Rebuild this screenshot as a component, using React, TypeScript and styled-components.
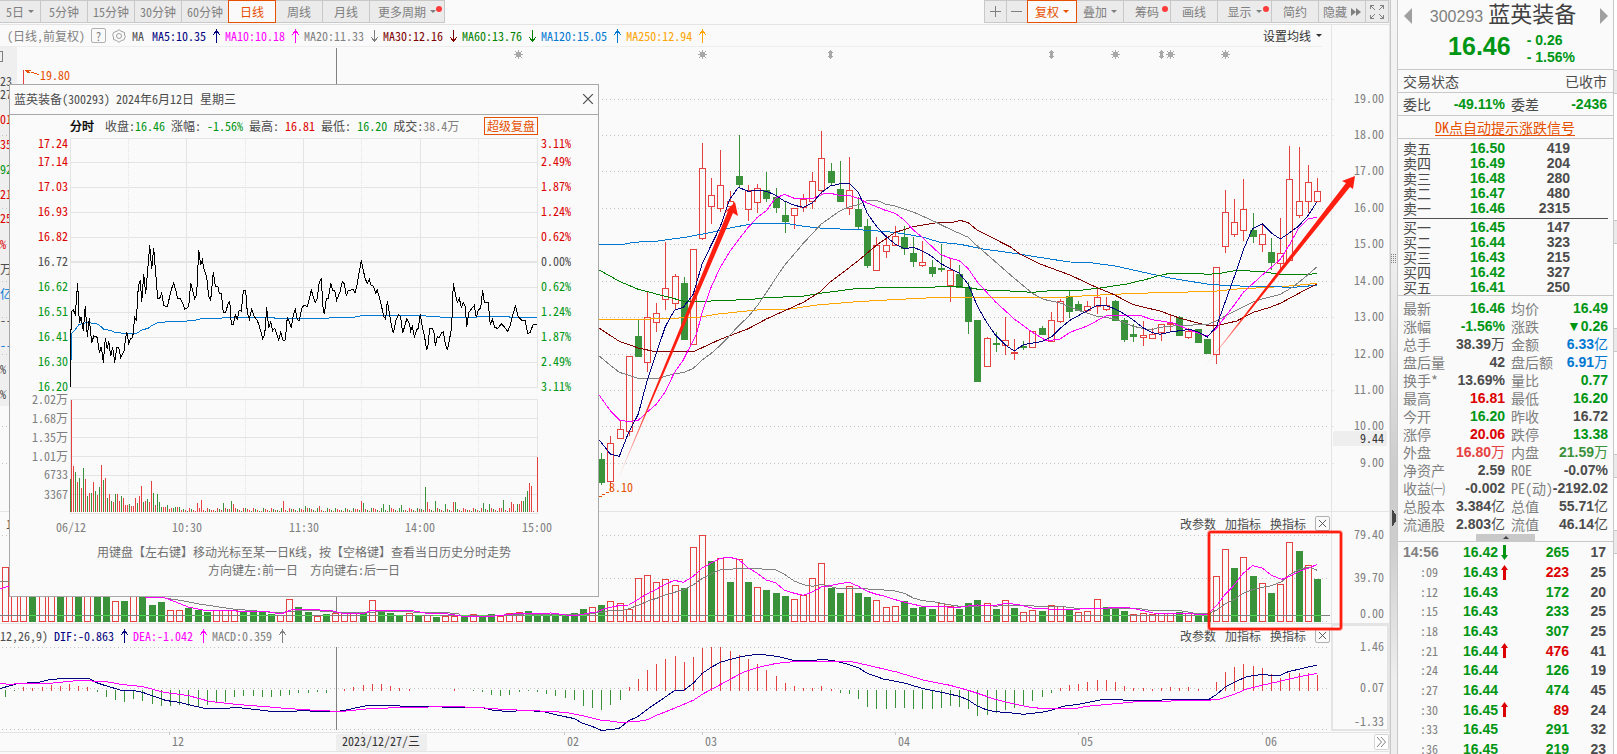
import React from "react";
import styled, { createGlobalStyle } from "styled-components";

const C = {
  bg: "#fafafa",
  line: "#e4e4e4",
  frame: "#c8c8c8",
  text: "#4c4c4c",
  mute: "#7f7f7f",
  green: "#009614",
  red: "#dc0000",
  blue: "#0078d2",
  orange: "#e65000",
  navy: "#000080",
  pink: "#ff00ff",
  maroon: "#800000",
  up: "#e64141",
  down: "#3a923a",
};

const sim = `"Noto Sans Mono CJK SC", "Noto Sans CJK SC", monospace`;
const arial = `"Liberation Sans", "Noto Sans CJK SC", sans-serif`;

const Global = createGlobalStyle`
  * { box-sizing: border-box; }
  body { margin: 0; background: ${C.bg}; color: ${C.text}; font: 12px/16px ${sim}; overflow: hidden; }
  button { font: inherit; color: inherit; background: none; border: 0; padding: 0; margin: 0; cursor: pointer; white-space: nowrap; }
  table { border-collapse: separate; border-spacing: 0; }
  td, th { padding: 0; font-weight: normal; text-align: left; }
  p, h1, h2 { margin: 0; font-weight: normal; }
`;

const Page = styled.div`
  display: flex;
  min-height: 100vh;
`;

const Main = styled.main`
  position: relative;
  flex: 1;
  min-width: 0;
  border-right: 1px solid ${C.line};
  overflow: hidden;
`;

/* ---------- toolbar ---------- */

const Toolbar = styled.nav`
  display: flex;
  justify-content: space-between;
  height: 25px;
  border-bottom: 1px solid ${C.line};
`;

const ToolGroup = styled.div`
  display: flex;
  height: 23px;
`;

const Tool = styled.button<{ $w: number; $on?: boolean }>`
  position: relative;
  display: flex;
  align-items: center;
  justify-content: center;
  gap: 4px;
  width: ${(p) => p.$w + 1}px;
  margin-left: -1px;
  border: 1px solid ${(p) => (p.$on ? C.orange : C.frame)};
  background: ${(p) => (p.$on ? C.bg : "#ebebeb")};
  color: ${(p) => (p.$on ? C.orange : C.mute)};
  z-index: ${(p) => (p.$on ? 1 : 0)};
`;

const Caret = styled.i`
  border: 3px solid transparent;
  border-top-color: currentColor;
  border-bottom: 0;
`;

const Dot = styled.i`
  position: absolute;
  top: 5px;
  right: 2px;
  width: 6px;
  height: 6px;
  border-radius: 3px;
  background: #ff3c3c;
`;

/* ---------- pane headers ---------- */

const Header = styled.div<{ $h: number }>`
  display: flex;
  height: ${(p) => p.$h}px;
`;

const HeaderBody = styled.div<{ $ruled?: boolean }>`
  display: flex;
  align-items: center;
  flex: 1;
  min-width: 0;
  margin-right: ${(p) => (p.$ruled ? 9 : 0)}px;
  border-bottom: ${(p) => (p.$ruled ? 1 : 0)}px solid #ededed;
  white-space: pre;
`;

const AxisCell = styled.div`
  width: 58px;
  border-left: 1px solid ${C.line};
`;

const Pane = styled.section`
  border-top: 1px solid ${C.line};
`;

const Chart = styled.svg`
  position: relative;
  display: block;
  width: 100%;
  overflow: visible;
  text {
    font: 12px ${sim};
    white-space: pre;
  }
`;

const FrontChart = styled(Chart)`
  z-index: 1;
`;

const Title = styled.span`
  margin: 0 6px 0 7px;
  color: ${C.mute};
`;

const Help = styled.button`
  width: 15px;
  height: 15px;
  margin-right: 6px;
  border: 1px solid #b0b0b0;
  border-radius: 2px;
  color: ${C.mute};
  line-height: 13px;
`;

const IconButton = styled.button`
  width: 14px;
  height: 14px;
  margin-right: 6px;
  svg { display: block; }
`;

const Legend = styled.span<{ $c: string }>`
  display: flex;
  align-items: center;
  gap: 4px;
  margin-right: 3px;
  color: ${(p) => p.$c};
`;

const Lead = styled.span<{ $gap: number }>`
  margin-right: ${(p) => p.$gap}px;
`;

const Push = styled.div`
  display: flex;
  align-items: center;
  gap: 9px;
  margin-left: auto;
`;

const Actions = styled(Push)`
  padding-right: 1px;
`;

const Setting = styled.button`
  display: flex;
  align-items: center;
  gap: 5px;
  color: #333;
`;

const CloseBox = styled.button`
  width: 15px;
  height: 15px;
  border: 1px solid #b0b0b0;
  border-radius: 2px;
  svg { display: block; margin: 2px; }
`;

const Arrow = ({ down }: { down?: boolean }) => (
  <svg width="12" height="14" viewBox="0 0 12 14" fill="none" stroke="currentColor" shapeRendering="crispEdges">
    {down ? <path d="M6.5 1v12M4.5 9v2M8.5 9v2M3.5 8v1M9.5 8v1M5.5 10v2M7.5 10v2" /> : <path d="M6.5 0v14M5.5 2v2M7.5 2v2M4.5 3v2M8.5 3v2M3.5 5v1M9.5 5v1" />}
  </svg>
);

const Cross = ({ s, c }: { s: number; c: string }) => (
  <svg width={s} height={s} viewBox="0 0 10 10" stroke={c} fill="none">
    <path d="M1 1L9 9M9 1L1 9" />
  </svg>
);

/* ---------- popup ---------- */

const Popup = styled.section`
  position: absolute;
  left: 9px;
  top: 84px;
  z-index: 3;
  width: 590px;
  height: 513px;
  border: 1px solid #a8a8a8;
  background: ${C.bg};
`;

const PopupTitle = styled.header`
  display: flex;
  align-items: center;
  justify-content: space-between;
  height: 30px;
  padding: 0 4px 2px;
  border-bottom: 1px solid #a8a8a8;
  h2 { font-size: 12px; }
`;

const PopupClose = styled.button`
  width: 12px;
  height: 12px;
  svg { display: block; }
`;

const PopupInfo = styled.div`
  display: flex;
  align-items: center;
  height: 22px;
  padding-left: 60px;
  white-space: pre;
  b { margin-right: 11px; color: #000; font-weight: normal; -webkit-text-stroke: 0.4px #000; }
`;

const Replay = styled.button`
  width: 54px;
  height: 18px;
  margin: 0 60px 0 auto;
  border: 1px solid ${C.orange};
  color: ${C.orange};
`;

const Tone = styled.span<{ $c: string; $gap?: number }>`
  color: ${(p) => p.$c};
  margin-right: ${(p) => p.$gap || 0}px;
`;

const Tip = styled.p`
  color: #707070;
  text-align: center;
  line-height: 18px;
  white-space: pre;
`;

const TipBox = styled.div`
  padding-top: 6px;
`;

/* ---------- quote panel ---------- */

const Splitter = styled.div`
  display: flex;
  flex-direction: column;
  align-items: center;
  width: 8px;
  border-left: 1px solid ${C.frame};
  border-right: 1px solid ${C.frame};
  background: linear-gradient(#f4f4f4, #eeeeee 35%, #cdcdcd 62%, #cdcdcd 72%, #eeeeee 90%);
`;

const Quote = styled.aside`
  width: 216px;
  height: 100vh;
  overflow: hidden;
  border-right: 1px solid ${C.frame};
  font-size: 14px;
`;

const Strip = styled.div`
  width: 3px;
  background: #fff;
`;

const StripTab = styled.div<{ $gap: number }>`
  height: 24px;
  margin-top: ${(p) => p.$gap}px;
  background: #ebebeb;
  border-top: 1px solid ${C.frame};
  border-bottom: 1px solid ${C.frame};
`;

const QuoteHead = styled.header`
  height: 70px;
  border-bottom: 1px solid ${C.frame};
`;

const NameRow = styled.div`
  display: flex;
  align-items: center;
  justify-content: space-between;
  height: 32px;
  padding: 0 5px 0 6px;
  button { height: 16px; }
  svg { display: block; }
  h1 { padding-right: 6px; font: 22px/30px ${arial}; color: #404040; }
  span { margin-right: 5px; font-size: 16px; color: ${C.mute}; }
`;

const PriceRow = styled.div`
  display: flex;
  justify-content: center;
  gap: 16px;
  padding: 0 2px 0 14px;
  color: ${C.green};
  font: bold 25px/28px ${arial};
  small { display: block; font: bold 14px/17px ${arial}; white-space: pre; }
`;

const Line = styled.div<{ $center?: boolean }>`
  display: flex;
  align-items: center;
  justify-content: ${(p) => (p.$center ? "center" : "space-between")};
  height: 23px;
  padding: 0 6px 0 5px;
  border-bottom: 1px solid ${C.frame};
  a { color: ${C.orange}; line-height: 16px; text-underline-offset: 2px; }
`;

const QuadLine = styled(Line)`
  display: grid;
  grid-template-columns: 44px 58px 1fr auto;
  > span:nth-child(2) { text-align: right; }
  > span:nth-child(3) { padding-left: 6px; }
`;

const Num = styled.span<{ $c?: string }>`
  display: block;
  color: ${(p) => p.$c || C.text};
  font-family: ${arial};
  font-size: 14px;
  font-weight: bold;
  white-space: nowrap;
  i { font-weight: normal; font-style: normal; }
`;

const Book = styled.table<{ $last?: boolean }>`
  width: 205px;
  margin: ${(p) => (p.$last ? "1px 5px 0" : "2px 5px 0")};
  padding-bottom: ${(p) => (p.$last ? 0 : 2)}px;
  table-layout: fixed;
  border-bottom: ${(p) => (p.$last ? "0" : "1px solid #505050")};
  tr { height: 15px; }
  td, th { height: 15px; line-height: 15px; }
  th { width: 40px; }
  td { width: 62px; text-align: right; }
  td + td { width: 65px; }
  td:last-child { width: 38px; }
`;

const Books = styled.div`
  border-bottom: 1px solid ${C.frame};
`;

const Stats = styled.table`
  width: 205px;
  margin: 3px 5px 0;
  table-layout: fixed;
  th, td { height: 18px; line-height: 18px; white-space: nowrap; }
  th { color: ${C.mute}; }
  td { text-align: right; }
  col:nth-child(1), col:nth-child(3) { width: 44px; }
  col:nth-child(2) { width: 58px; }
  td > span { float: right; }
  i { line-height: 14px; }
  th + td + th { padding-left: 6px; }
`;

const Fold = styled.div`
  display: flex;
  justify-content: center;
  height: 9px;
  padding-top: 1px;
  border-bottom: 1px solid ${C.frame};
`;

const FoldTab = styled.button`
  width: 59px;
  background: ${C.frame};
  svg { display: block; margin: 0 auto; }
`;

const Ticks = styled.table`
  width: 203px;
  margin: 0 5px;
  table-layout: fixed;
  tr { height: 20px; }
  tr:nth-child(3n) { height: 19px; }
  td { text-align: right; line-height: 18px; }
  td:nth-child(1) { width: 35px; color: ${C.mute}; }
  td:nth-child(2) { width: 60px; }
  td:nth-child(3) { width: 12px; }
  td:nth-child(4) { width: 59px; }
  svg { display: block; margin: 0 auto; }
`;

const Time = styled.span<{ $b: boolean }>`
  display: block;
  font-family: ${(p) => (p.$b ? arial : sim)};
  font-size: ${(p) => (p.$b ? 14 : 12)}px;
  font-weight: ${(p) => (p.$b ? "bold" : "normal")};
`;

/* ---------- series: three grid units to a pixel, from the pane's plot origin ---------- */

const STEP = 9.175;
const barX = (i: number) => Math.floor(601.7 + i * STEP);

const trace = (pts: number[], ox: number, oy: number, unit = 3) => {
  const out: string[] = [];
  for (let i = 0; i < pts.length; i += 2) out.push(`${(ox + pts[i] / unit).toFixed(1)},${(oy + pts[i + 1] / unit).toFixed(1)}`);
  return out.join(" ");
};

// high, body top, body bottom, low, rising
const candles: number[][] = [
  [999, 1017, 1088, 1097, 0], [948, 970, 1084, 1110, 1], [901, 928, 956, 956, 1], [709, 709, 935, 950, 1], [600, 648, 708, 711, 0],
  [517, 592, 727, 756, 1], [550, 580, 607, 636, 1], [366, 505, 538, 570, 1], [462, 469, 550, 567, 1], [471, 489, 657, 660, 0],
  [388, 388, 673, 673, 1], [70, 145, 355, 360, 1], [174, 226, 259, 312, 1], [91, 196, 265, 276, 1], [213, 244, 259, 262, 1],
  [45, 168, 194, 205, 0], [195, 211, 268, 303, 1], [192, 205, 247, 279, 1], [156, 210, 236, 248, 0], [204, 231, 263, 281, 0],
  [245, 285, 303, 339, 0], [265, 265, 286, 327, 1], [222, 238, 262, 276, 1], [156, 184, 244, 268, 1], [33, 115, 211, 225, 1],
  [129, 153, 188, 198, 0], [123, 207, 245, 245, 0], [111, 211, 265, 285, 1], [231, 267, 318, 331, 0], [297, 318, 437, 444, 0],
  [351, 376, 451, 451, 1], [345, 376, 394, 414, 1], [318, 349, 376, 376, 1], [318, 351, 385, 406, 0], [351, 399, 425, 441, 0],
  [363, 427, 436, 443, 1], [420, 441, 459, 473, 0], [373, 444, 449, 456, 0], [414, 451, 496, 548, 1], [435, 462, 503, 503, 0],
  [486, 502, 603, 644, 0], [600, 600, 785, 785, 0], [652, 655, 739, 739, 1], [636, 669, 671, 698, 0], [591, 661, 676, 705, 1],
  [657, 696, 701, 720, 1], [663, 678, 683, 690, 0], [634, 634, 683, 683, 1], [618, 624, 644, 647, 0], [576, 601, 664, 664, 1],
  [538, 544, 604, 611, 1], [513, 530, 573, 594, 0], [543, 552, 571, 573, 0], [544, 559, 572, 576, 1], [505, 532, 559, 583, 1],
  [532, 556, 568, 573, 1], [541, 543, 600, 603, 0], [595, 600, 659, 666, 0], [612, 642, 650, 666, 0], [603, 646, 652, 678, 1],
  [624, 643, 656, 656, 1], [613, 613, 637, 663, 1], [582, 609, 613, 634, 1], [588, 592, 645, 647, 0], [626, 634, 653, 657, 1],
  [627, 627, 668, 671, 0], [657, 657, 701, 704, 0], [442, 442, 704, 732, 1], [210, 277, 379, 399, 1], [237, 307, 343, 351, 1],
  [177, 268, 331, 363, 1], [279, 330, 348, 369, 0], [310, 343, 373, 396, 1], [354, 396, 426, 450, 0], [294, 400, 430, 450, 1],
  [78, 178, 421, 421, 1], [81, 244, 286, 294, 1], [135, 187, 244, 279, 1], [174, 214, 244, 244, 1],
];

const averages: { c: string; pts: number[] }[] = [
  { c: "#ffa500", pts: [28, 599, 100, 600, 150, 598, 250, 595, 330, 591, 385, 582, 500, 570, 600, 567, 680, 555, 800, 545, 930, 538, 1050, 532, 1420, 532, 1490, 527, 1570, 523, 1730, 517, 1860, 515, 1940, 507, 2040, 502, 2110, 497, 2180, 490] },
  { c: C.blue, pts: [28, 373, 100, 373, 130, 367, 205, 363, 290, 351, 370, 336, 430, 322, 485, 312, 530, 310, 600, 312, 640, 319, 700, 325, 840, 331, 910, 337, 950, 343, 1000, 352, 1050, 367, 1110, 373, 1180, 387, 1280, 401, 1385, 418, 1440, 426, 1495, 427, 1580, 439, 1670, 459, 1740, 474, 1850, 492, 1910, 497, 2040, 500, 2110, 502, 2180, 496] },
  { c: "#008000", pts: [28, 450, 88, 484, 145, 508, 226, 529, 290, 546, 340, 544, 490, 538, 530, 532, 630, 530, 660, 525, 690, 520, 790, 507, 850, 505, 870, 502, 1020, 502, 1050, 500, 1110, 500, 1150, 506, 1200, 511, 1260, 513, 1327, 517, 1370, 513, 1470, 511, 1530, 504, 1610, 492, 1670, 478, 1700, 468, 1740, 460, 1810, 460, 1855, 463, 1890, 460, 1940, 451, 2020, 455, 2060, 462, 2160, 463, 2180, 460] },
  { c: C.maroon, pts: [28, 625, 88, 664, 145, 684, 190, 694, 255, 694, 290, 696, 315, 693, 391, 658, 475, 626, 529, 597, 640, 547, 690, 516, 721, 486, 805, 422, 860, 375, 916, 337, 970, 320, 1040, 308, 1090, 307, 1110, 301, 1135, 308, 1162, 331, 1260, 380, 1290, 402, 1350, 432, 1440, 465, 1519, 502, 1570, 523, 1630, 554, 1710, 573, 1770, 595, 1852, 616, 1890, 615, 1940, 603, 1990, 577, 2040, 562, 2071, 550, 2130, 518, 2180, 492] },
  { c: "#808080", pts: [28, 708, 60, 735, 88, 757, 145, 775, 205, 775, 250, 762, 283, 757, 310, 745, 337, 720, 364, 700, 391, 676, 418, 648, 445, 618, 475, 590, 502, 557, 529, 518, 556, 476, 583, 437, 640, 370, 694, 312, 748, 274, 778, 260, 805, 254, 832, 241, 860, 241, 886, 252, 916, 258, 970, 276, 1024, 300, 1081, 328, 1135, 352, 1162, 378, 1216, 425, 1273, 475, 1327, 520, 1360, 538, 1411, 549, 1465, 571, 1519, 588, 1576, 597, 1630, 619, 1680, 630, 1710, 622, 1770, 616, 1852, 614, 1879, 603, 1930, 575, 1987, 547, 2017, 537, 2071, 523, 2110, 500, 2140, 476, 2180, 441] },
  { c: C.pink, pts: [28, 826, 61, 872, 88, 900, 116, 905, 145, 901, 172, 876, 199, 853, 226, 815, 253, 758, 280, 720, 300, 680, 320, 640, 337, 576, 364, 500, 391, 442, 418, 397, 445, 360, 475, 322, 502, 292, 529, 272, 556, 235, 583, 223, 613, 235, 670, 235, 700, 222, 721, 220, 748, 226, 778, 226, 805, 235, 832, 249, 886, 271, 916, 280, 943, 300, 970, 330, 997, 352, 1024, 378, 1051, 403, 1081, 415, 1108, 422, 1135, 446, 1162, 486, 1216, 545, 1273, 597, 1327, 637, 1370, 663, 1410, 657, 1440, 637, 1492, 618, 1549, 587, 1590, 585, 1655, 588, 1687, 599, 1750, 609, 1800, 631, 1852, 649, 1879, 625, 1906, 590, 1933, 555, 1960, 517, 2017, 465, 2044, 442, 2071, 418, 2098, 375, 2125, 326, 2155, 297, 2180, 292] },
  { c: C.navy, pts: [28, 960, 61, 1002, 88, 1009, 115, 940, 145, 882, 172, 780, 199, 700, 226, 620, 253, 571, 280, 562, 310, 522, 337, 430, 364, 375, 391, 320, 418, 240, 445, 202, 475, 214, 502, 211, 529, 214, 556, 225, 583, 243, 613, 256, 640, 262, 667, 249, 694, 218, 721, 198, 748, 192, 778, 190, 805, 216, 832, 280, 859, 318, 886, 348, 916, 372, 943, 386, 970, 382, 997, 393, 1024, 408, 1051, 430, 1081, 446, 1108, 460, 1135, 493, 1162, 558, 1189, 605, 1216, 645, 1246, 675, 1273, 693, 1300, 674, 1354, 665, 1384, 651, 1411, 625, 1438, 602, 1492, 572, 1519, 557, 1549, 557, 1576, 567, 1603, 582, 1630, 600, 1657, 622, 1687, 638, 1710, 643, 1741, 636, 1800, 628, 1825, 636, 1852, 651, 1879, 620, 1906, 545, 1933, 470, 1960, 390, 1987, 327, 2017, 311, 2044, 339, 2071, 357, 2098, 339, 2125, 319, 2155, 286, 2180, 246] },
];

// bar tops from index -65; a leading minus marks a falling day
const volumes = [
  232, 300, 300, -300, 300, 300, -300, 300, -300, 300, -300, -300, 334, -333, 300, -318, -345, -336, 361, 361, -354, -360, -366, 361, 361, 361,
  -363, -361, -364, -372, 376, 328, -351, -366, 379, -372, 370, 367, 369, -369, 331, -364, -369, -378, 369, -378, 375, -381, 379, 378, -379, 373,
  -380, -372, 379, 370, 367, -363, -376, -376, -377, -375, -369, -357, 352,
  -345, 334, 340, 358, 265, 256, 277, 268, 286, -294, 172, 136, -213, 205, -276, 208, -276, 292, -300, -309, -318, 328, 316, 265, 220, -294, -309,
  289, -309, -321, 331, 352, 349, -333, -354, -351, -357, 340, 349, -357, -339, -330, 340, -357, 331, -354, 367, 361, -363, 346, 349, -360, 367,
  364, 328, -351, -357, -363, 373, 371, 373, 371, 371, -366, 370, -375, -370, 259, 178, -234, 202, -258, 280, -309, 283, 157, -183, 226, -267,
];

const histogram = [
  -21, -3, 8, 5, 8, 15, 12, 18, 12, 9, -5, -21, -30, -36, -26, -32, -42, -47, -47, -44, -48, -48, -44, -38, -36, -21, -18, -18, -21, -21,
  -18, -15, -9, -9, -6, -9, 0, 2, 9, 15, 18, 18, 12, 6, 2, 0, 0, 0, 0, 2, 0, -2, -6, -15, -19, -15, -6, -2, -6, -12, -18, -24, -29, -48, -54,
  -60, -45, -30, 8, 33, 60, 78, 93, 102, 84, 99, 126, 129, 129, 117, 105, 93, 78, 60, 42, 21, 12, 6, 6, 12, 3, -9, -12, -27, -51, -57, -57,
  -54, -54, -57, -57, -57, -54, -48, -51, -57, -78, -75, -68, -60, -54, -45, -33, -21, -9, 6, 15, 18, 24, 30, 30, 24, 12, 6, 6, 3, 6, 9, 6, 9,
  3, 0, 24, 54, 69, 78, 72, 66, 48, 36, 51, 51, 50, 45,
];

const volFastEarly = [145, 597, 165, 598, 176, 602, 188, 607, 203, 610, 233, 610, 239, 612, 264, 611, 281, 614, 291, 610, 306, 609, 333, 611, 341, 613, 362, 614, 373, 610, 409, 610, 425, 613, 448, 614, 461, 616, 486, 617, 513, 614, 551, 613, 574, 616, 589, 613];
const volSlowEarly = [145, 597, 165, 598, 184, 601, 199, 604, 233, 609, 268, 612, 285, 612, 306, 610, 333, 612, 367, 613, 383, 611, 413, 612, 440, 612, 459, 614, 461, 616, 486, 616, 524, 614, 563, 615, 589, 614];
const volFast = [0, 367, 20, 366, 40, 358, 65, 351, 90, 346, 116, 345, 145, 328, 172, 311, 200, 297, 226, 283, 253, 271, 280, 277, 310, 259, 337, 234, 364, 219, 391, 205, 418, 202, 445, 208, 475, 234, 502, 250, 529, 270, 556, 278, 583, 300, 613, 310, 640, 316, 667, 306, 694, 291, 721, 287, 748, 281, 778, 277, 805, 289, 832, 304, 859, 313, 886, 319, 916, 329, 943, 336, 970, 343, 997, 349, 1051, 349, 1081, 352, 1108, 352, 1135, 348, 1162, 345, 1216, 346, 1246, 340, 1280, 343, 1310, 350, 1327, 354, 1375, 357, 1470, 357, 1510, 356, 1600, 352, 1630, 355, 1660, 362, 1690, 369, 1770, 371, 1853, 373, 1879, 348, 1906, 313, 1933, 285, 1960, 250, 1987, 227, 2017, 234, 2044, 256, 2075, 268, 2098, 259, 2125, 245, 2155, 235, 2182, 223];
const volSlow = [0, 371, 34, 367, 61, 361, 100, 361, 116, 356, 145, 346, 172, 334, 200, 325, 226, 315, 253, 307, 280, 300, 310, 285, 337, 265, 364, 251, 391, 239, 430, 237, 460, 235, 515, 237, 556, 239, 583, 253, 613, 273, 640, 284, 667, 289, 694, 283, 721, 290, 748, 296, 805, 296, 860, 298, 916, 303, 943, 310, 970, 324, 997, 332, 1030, 335, 1060, 341, 1108, 349, 1162, 349, 1189, 345, 1215, 349, 1246, 346, 1310, 346, 1340, 349, 1420, 350, 1460, 355, 1640, 355, 1690, 362, 1770, 362, 1810, 369, 1853, 371, 1879, 361, 1906, 341, 1933, 328, 1960, 310, 1987, 299, 2017, 292, 2044, 287, 2075, 275, 2098, 255, 2125, 239, 2155, 231, 2182, 241];

const difEarly = [0, 688, 11, 685, 17, 683, 38, 682, 50, 679, 65, 678, 89, 678, 96, 682, 105, 685, 122, 690, 134, 690, 143, 692, 166, 700, 180, 702, 188, 704, 205, 708, 224, 708, 237, 707, 264, 710, 272, 711, 293, 711, 302, 710, 318, 711, 337, 711, 344, 710, 362, 706, 369, 705, 394, 705, 406, 706, 425, 706, 459, 707, 482, 707, 494, 710, 509, 711, 524, 710, 543, 711, 555, 714, 564, 716, 574, 718, 583, 723, 590, 725];
const deaEarly = [0, 683, 11, 684, 17, 683, 48, 683, 78, 680, 105, 681, 122, 684, 142, 686, 165, 692, 188, 695, 210, 701, 237, 704, 264, 706, 287, 708, 318, 710, 341, 711, 371, 708, 406, 707, 452, 706, 478, 707, 505, 709, 551, 711, 566, 712, 582, 715, 590, 717];
const dif = [0, 706, 34, 721, 61, 719, 88, 715, 115, 693, 145, 679, 172, 658, 226, 621, 253, 602, 283, 600, 310, 580, 337, 550, 364, 532, 391, 517, 418, 509, 460, 499, 502, 493, 529, 495, 560, 499, 610, 511, 675, 511, 700, 508, 740, 514, 778, 524, 805, 533, 832, 550, 880, 567, 943, 579, 1000, 596, 1060, 608, 1108, 619, 1135, 630, 1162, 648, 1189, 659, 1216, 665, 1246, 667, 1300, 673, 1354, 667, 1384, 661, 1420, 649, 1470, 642, 1530, 630, 1570, 628, 1610, 631, 1690, 632, 1740, 628, 1855, 629, 1879, 614, 1906, 591, 1933, 577, 1970, 560, 2017, 553, 2040, 556, 2070, 556, 2095, 545, 2155, 531, 2180, 526];
const dea = [0, 682, 34, 691, 70, 694, 100, 699, 115, 696, 160, 692, 180, 686, 200, 676, 250, 656, 310, 631, 340, 611, 400, 579, 460, 547, 500, 533, 560, 520, 600, 516, 700, 514, 780, 514, 830, 525, 920, 546, 1000, 570, 1080, 586, 1135, 601, 1189, 619, 1215, 628, 1270, 641, 1310, 650, 1350, 655, 1400, 657, 1460, 655, 1490, 649, 1590, 640, 1650, 634, 1730, 634, 1770, 631, 1853, 631, 1890, 627, 1930, 614, 1970, 597, 2020, 585, 2070, 574, 2120, 562, 2182, 550];

const intraday = [
  212, 920, 212, 807, 214, 695, 220, 690, 226, 702, 233, 608, 238, 730, 243, 712, 250, 752, 256, 677, 262, 770, 268, 715, 275, 790, 281, 768, 292, 772, 298, 818, 304, 800, 310, 848, 316, 775, 322, 808, 326, 782, 332, 828, 338, 802, 344, 848, 350, 803, 356, 803, 362, 833, 372, 812, 375, 790, 380, 755, 386, 790, 392, 775, 398, 773, 404, 712, 409, 722, 415, 620, 421, 600, 425, 666, 431, 583, 437, 641, 443, 570, 449, 495, 455, 568, 461, 505, 467, 580, 473, 655, 479, 655, 485, 640, 491, 677, 502, 680, 508, 655, 515, 625, 521, 610, 527, 630, 533, 656, 541, 656, 548, 670, 554, 688, 566, 680, 572, 610, 578, 632, 584, 656, 590, 643, 596, 510, 602, 555, 607, 540, 613, 570, 620, 590, 626, 650, 632, 660, 640, 575, 646, 618, 653, 618, 658, 640, 664, 640, 670, 698, 677, 697, 683, 675, 689, 662, 694, 733, 700, 733, 706, 705, 712, 717, 718, 690, 724, 693, 730, 632, 737, 632, 742, 697, 748, 718, 755, 688, 762, 708, 772, 722, 778, 738, 788, 775, 794, 765, 800, 682, 806, 745, 812, 725, 818, 752, 824, 745, 830, 763, 836, 780, 842, 757, 849, 781, 856, 780, 862, 712, 868, 725, 874, 745, 880, 705, 886, 688, 892, 718, 898, 722,
  905, 685, 912, 676, 922, 680, 934, 631, 946, 668, 952, 655, 958, 605, 964, 598, 969, 680, 973, 703, 979, 655, 985, 655, 992, 610, 998, 632, 1004, 632, 1010, 660, 1020, 635, 1027, 604, 1033, 612, 1039, 646, 1045, 632, 1060, 628, 1065, 640, 1070, 620, 1084, 541, 1095, 595, 1102, 610, 1108, 598, 1114, 617, 1120, 618, 1127, 640, 1132, 630, 1144, 675, 1151, 710, 1157, 717, 1162, 662, 1170, 710, 1174, 735, 1180, 760, 1188, 720, 1196, 703, 1202, 712, 1208, 760, 1220, 717, 1228, 730, 1232, 753, 1237, 740, 1243, 770, 1250, 750, 1255, 745, 1261, 703, 1267, 742, 1273, 765, 1280, 811, 1284, 795, 1289, 745, 1297, 745, 1302, 760, 1306, 797, 1312, 770, 1318, 773, 1324, 760, 1330, 755, 1336, 790, 1342, 811, 1349, 775, 1355, 740, 1360, 610, 1366, 640, 1372, 668, 1378, 655, 1384, 682, 1390, 668, 1396, 680, 1400, 740, 1407, 697, 1415, 686, 1423, 676, 1429, 712, 1435, 690, 1442, 683, 1448, 631, 1453, 668, 1465, 668, 1471, 735, 1477, 718, 1485, 743, 1494, 745, 1504, 732, 1515, 743, 1523, 754, 1530, 738, 1540, 700, 1546, 677, 1555, 710, 1565, 720, 1575, 720, 1583, 760, 1590, 758, 1600, 733, 1611, 733,
];
const mean = [214, 840, 216, 760, 225, 750, 236, 734, 262, 727, 295, 733, 312, 748, 335, 752, 345, 757, 370, 760, 410, 760, 425, 750, 445, 745, 455, 737, 475, 727, 515, 725, 580, 722, 610, 715, 660, 715, 680, 712, 820, 712, 825, 715, 985, 715, 990, 712, 1060, 712, 1090, 706, 1275, 706, 1278, 709, 1320, 711, 1430, 711, 1435, 709, 1525, 709, 1530, 712, 1611, 712];

const opening = [336, 138, -120, 90, -102, 72, -132, 99, -48, 57, -57, 90, -63, 51, -75, 141, -96, 102, -42, 54, -33, 30, -54, 54, 33, -48, 42, 21, 21, -24, 18, 18, 42, -27, 48, 78, -30, 33, -39, 30, 93, -57, 21, -54, -30, -15, 15, 15, -21, 9, 12, -12, -15, 15, -15, 6];
const spikes: Record<number, number> = { 64: 27, 66: 36, 77: -27, 81: -33, 82: 24, 107: 33, 118: -18, 125: 18, 146: 33, 147: -27, 157: -24, 160: -21, 166: -21, 178: -75, 179: 30, 183: -33, 188: -24, 192: 30, 193: -30, 207: -27, 210: -24, 217: -36, 221: 30, 222: 24, 224: -24, 225: 24, 226: 33, 227: -33, 228: -45, 229: -63, 230: 87, 231: 78, 232: 3, 233: 0, 234: 165 };
const minuteVolume = Array.from({ length: 234 }, (_, n) => {
  const k = n + 1;
  if (k in spikes) return spikes[k];
  if (n < opening.length) return opening[n];
  const h = 3 + ((k * 7 + (k >> 3)) % 4) * 3;
  return (k * 5) % 9 < 5 ? h : -h;
});

const Dots = ({ ys, to }: { ys: number[]; to: number }) => (
  <g stroke="#c4c4c4" strokeDasharray="1 3">
    {ys.map((y) => <line key={y} x1="2" x2={to} y1={y + 0.5} y2={y + 0.5} />)}
  </g>
);

const AxisText = ({ rows }: { rows: [string, number][] }) => (
  <g fill={C.mute} textAnchor="end">
    {rows.map(([t, y]) => <text key={t} x="1384" y={y + 4}>{t}</text>)}
  </g>
);

const priceRows: [string, number][] = [["19.00", 99], ["18.00", 135], ["17.00", 171], ["16.00", 208], ["15.00", 244], ["14.00", 281], ["13.00", 317], ["12.00", 354], ["11.00", 390], ["10.00", 426], ["9.00", 463]];

const clipped: [string, number, string][] = [["23", 82, C.text], ["27", 95, C.text], ["01", 120, C.red], ["35", 145, C.red], ["92", 170, C.green], ["21", 195, C.red], ["25", 219, C.red], ["%", 245, C.red], ["万", 270, C.text], ["亿", 295, C.blue], ["--", 321, C.text], ["--", 346, C.blue], ["%", 370, C.text], ["%", 395, C.text]];

const PriceChart = () => (
  <Chart height="464" viewBox="0 47 1389 464" preserveAspectRatio="xMinYMin meet" shapeRendering="crispEdges">
    <defs>
      <linearGradient id="rise1" gradientUnits="userSpaceOnUse" x1="616" y1="483" x2="735" y2="203">
        <stop offset="0" stopColor="#ff1e10" stopOpacity="0.1" /><stop offset="0.3" stopColor="#ff1e10" />
      </linearGradient>
      <linearGradient id="rise2" gradientUnits="userSpaceOnUse" x1="1203" y1="368" x2="1355" y2="176">
        <stop offset="0" stopColor="#ff1e10" stopOpacity="0.1" /><stop offset="0.3" stopColor="#ff1e10" />
      </linearGradient>
    </defs>
    <rect x="0" y="47" width="17" height="359" fill="#efeff0" />
    <path d="M-1 51.5H2.5V61.5H-1" fill="none" stroke={C.mute} />
    {clipped.map(([t, y, c]) => <text key={y} x="0" y={y + 4} fill={c}>{t}</text>)}
    <Dots ys={priceRows.map((r) => r[1])} to={1330} />
    <line x1="1331.5" x2="1331.5" y1="47" y2="511" stroke={C.line} />
    <g stroke={C.line}>{priceRows.map(([t, y]) => <line key={t} x1="1331" x2="1334" y1={y + 0.5} y2={y + 0.5} />)}</g>
    <AxisText rows={priceRows} />
    <rect x="1333" y="431" width="54" height="15" rx="2" fill="#eeeeee" />
    <text x="1384" y="443" textAnchor="end" fill="#333">9.44</text>
    <line x1="336.5" x2="336.5" y1="48" y2="511" stroke="#808080" />
    <line x1="23.5" x2="23.5" y1="70" y2="84" stroke={C.up} />
    <path d="M25 70.500h6M26 71.500h3M27 72.500h3M31 72.500h3M34 73.500h3M37 74.500h2" stroke={C.orange} />
    <text x="40" y="80" fill={C.orange}>19.80</text>
    <g fill="#a8a8a8">
      {[518, 702, 1115, 1170, 1225].map((x) => (
        <path key={x} d={`M${x - 2} 52h5v5h-5zM${x} 50h1v9h-1zM${x - 4} 54h9v1h-9zM${x - 3} 51h1v1h-1zM${x + 3} 51h1v1h-1zM${x - 3} 57h1v1h-1zM${x + 3} 57h1v1h-1z`} />
      ))}
      {[830, 1051, 1161].map((x) => <path key={x} d={`M${x} 50h1v9h-1zM${x - 1} 51h3v7h-3zM${x - 2} 52h5v1h-5zM${x - 2} 56h5v1h-5z`} />)}
    </g>
    {candles.map(([hi, top, bottom, lo, up], i) => {
      const x = barX(i);
      const y = (v: number) => 120 + Math.floor(v / 3);
      const h = Math.max(1, y(bottom) - y(top));
      const color = up ? C.up : C.down;
      return (
        <g key={i} stroke={color} fill={up ? "none" : color}>
          {hi < top && <line x1={x + 0.5} x2={x + 0.5} y1={y(hi)} y2={y(top)} />}
          {lo > bottom && <line x1={x + 0.5} x2={x + 0.5} y1={y(bottom)} y2={y(lo)} />}
          <rect x={x - 2.5} y={y(top) + 0.5} width="6" height={h} />
        </g>
      );
    })}
    <g fill="none">{averages.map((a) => <polyline key={a.c} points={trace(a.pts, 590, 120)} stroke={a.c} />)}</g>
    <path d="M599 496.500h3M602 494.500h3M606 492.500h3" stroke={C.orange} />
    <text x="609" y="492" fill={C.orange}>8.10</text>
    <g shapeRendering="geometricPrecision">
      <path d="M616 484L728 211L724 213L735 202L738 216L733 213Z" fill="url(#rise1)" />
      <path d="M1203 369L1346 183L1342 181L1355 176L1353 189L1350 187Z" fill="url(#rise2)" />
    </g>
  </Chart>
);

const VolumeChart = () => (
  <FrontChart height="88" viewBox="0 535 1389 88" preserveAspectRatio="xMinYMin meet" shapeRendering="crispEdges">
    <Dots ys={[535, 578, 621]} to={1330} />
    <line x1="1331.5" x2="1331.5" y1="535" y2="623" stroke={C.line} />
    <AxisText rows={[["79.40", 535], ["39.70", 578], ["0.00", 614]]} />
    <line x1="336.5" x2="336.5" y1="535" y2="622" stroke="#808080" />
    {volumes.map((v, n) => {
      const x = barX(n - 65);
      const y = 490 + Math.floor(Math.abs(v) / 3);
      return v > 0
        ? <rect key={n} x={x - 2.5} y={y + 0.5} width="6" height={621 - y} fill={C.bg} stroke={C.up} />
        : <rect key={n} x={x - 3} y={y} width="7" height={622 - y} fill={C.down} />;
    })}
    <line x1="0" x2="1330" y1="615.5" y2="615.5" stroke="#808080" />
    {volumes.map((v, n) => v < 0 && <line key={n} x1={barX(n - 65) - 3} x2={barX(n - 65) + 4} y1="615.5" y2="615.5" stroke="#50dc50" />)}
    <g fill="none">
      <polyline points={`0,581 9,581 ${trace(volSlowEarly, 0, 0, 1)} ${trace(volSlow, 590, 490)}`} stroke="#808080" />
      <polyline points={`0,589 9,586 ${trace(volFastEarly, 0, 0, 1)} ${trace(volFast, 590, 490)}`} stroke={C.pink} />
    </g>
    <g fill="none" shapeRendering="geometricPrecision">
      <rect x="1209" y="532" width="132" height="97" rx="2" stroke="#ff1e10" strokeOpacity="0.4" strokeWidth="4" />
      <rect x="1209" y="532" width="132" height="97" rx="2" stroke="#ff1e10" strokeWidth="2" />
    </g>
  </FrontChart>
);

const MacdChart = () => (
  <Chart height="85" viewBox="0 647 1389 85" preserveAspectRatio="xMinYMin meet" shapeRendering="crispEdges">
    <Dots ys={[647, 688, 729]} to={1330} />
    <rect x="1332" y="625" width="56" height="105" fill="none" stroke={C.line} strokeWidth="2" />
    <AxisText rows={[["1.46", 647], ["0.07", 688], ["-1.33", 722]]} />
    <line x1="336.5" x2="336.5" y1="647" y2="730" stroke="#808080" />
    {histogram.map((v, n) => v !== 0 && (
      <line key={n} x1={barX(n - 65) + 0.5} x2={barX(n - 65) + 0.5} y1={v > 0 ? 691 : 690} y2={Math.round(690 - v / 3)} stroke={v > 0 ? C.up : C.down} />
    ))}
    <g fill="none">
      <polyline points={`${trace(difEarly, 0, 0.5, 1)} ${trace(dif.slice(2), 590, 490)}`} stroke={C.navy} />
      <polyline points={`${trace(deaEarly, 0, 0.5, 1)} ${trace(dea.slice(2), 590, 490)}`} stroke={C.pink} />
    </g>
  </Chart>
);

const TimeAxis = () => (
  <Chart height="22" viewBox="0 732 1389 22" preserveAspectRatio="xMinYMin meet" shapeRendering="crispEdges">
    <path d="M0 732.500H1389M0 751.500H1389" stroke={C.line} />
    {([["12", 169], ["", 362], ["02", 564], ["03", 702], ["04", 895], ["05", 1078], ["06", 1262]] as [string, number][]).map(([t, x]) => (
      <g key={x}>
        <line x1={x + 0.5} x2={x + 0.5} y1="732" y2="735" stroke={C.frame} />
        <text x={x + 3} y="746" fill={C.mute}>{t}</text>
      </g>
    ))}
    <rect x="336" y="734" width="91" height="17" rx="2" fill="#eeeeee" />
    <text x="342" y="746" fill="#333">2023/12/27/三</text>
    <rect x="1374.500" y="734.500" width="14" height="15" rx="2" fill="#fff" stroke="#d4d4d4" />
    <path d="M1377 737L1381.500 742L1377 747M1381 737L1385.500 742L1381 747" fill="none" stroke={C.mute} shapeRendering="geometricPrecision" />
  </Chart>
);

const leftScale: [string, string, number, string][] = [
  ["17.24", "3.11%", 144, C.red], ["17.14", "2.49%", 162, C.red], ["17.03", "1.87%", 187, C.red], ["16.93", "1.24%", 212, C.red], ["16.82", "0.62%", 237, C.red],
  ["16.72", "0.00%", 262, C.text], ["16.62", "0.62%", 287, C.green], ["16.51", "1.24%", 312, C.green], ["16.41", "1.87%", 337, C.green], ["16.30", "2.49%", 362, C.green], ["16.20", "3.11%", 387, C.green],
];

const IntradayChart = () => (
  <Chart height="400" viewBox="10 137 588 400" preserveAspectRatio="xMinYMin meet" shapeRendering="crispEdges">
    <g stroke={C.line}>
      {[138, 162, 187, 212, 237, 262, 287, 312, 337, 362, 387, 399, 418, 437, 456, 475, 494, 513].map((y) => <line key={y} x1="70" x2="538" y1={y + 0.5} y2={y + 0.5} />)}
      <line x1="70" x2="538" y1="261.500" y2="261.500" />
      {[70, 186, 303, 420, 537].map((x) => <path key={x} d={`M${x + 0.5} 138V387M${x + 0.5} 399V513`} />)}
      {[128, 245, 361, 478].map((x) => <path key={x} d={`M${x + 0.5} 139V387M${x + 0.5} 400V513`} strokeDasharray="1 1" />)}
    </g>
    {leftScale.map(([l, r, y, c]) => (
      <g key={y} fill={c}>
        <text x="68" y={y + 4} textAnchor="end">{l}</text>
        <text x="541" y={y + 4}>{r}</text>
      </g>
    ))}
    <g fill={C.mute}>
      {([["2.02万", 400], ["1.68万", 419], ["1.35万", 438], ["1.01万", 457], ["6733", 475], ["3367", 495]] as [string, number][]).map(([t, y]) => <text key={t} x="68" y={y + 4} textAnchor="end">{t}</text>)}
      {([["06/12", 71], ["10:30", 187], ["11:30", 304], ["14:00", 420], ["15:00", 537]] as [string, number][]).map(([t, x]) => <text key={t} x={x} y="532" textAnchor="middle">{t}</text>)}
    </g>
    <line x1="70.500" x2="70.500" y1="479" y2="512" stroke={C.down} />
    {minuteVolume.map((v, k) => v !== 0 && (
      <line key={k} x1={Math.floor(71.5 + k * 2) + 0.5} x2={Math.floor(71.5 + k * 2) + 0.5} y1={512 - Math.round(Math.abs(v) / 3)} y2="512" stroke={v > 0 ? C.up : C.down} />
    ))}
    <g fill="none">
      <polyline points={trace(mean, 0, 80)} stroke={C.blue} />
      <polyline points={trace(intraday, 0, 80)} stroke="#000" />
    </g>
  </Chart>
);

const book = {
  sell: [["卖五", "16.50", "419"], ["卖四", "16.49", "204"], ["卖三", "16.48", "280"], ["卖二", "16.47", "480"], ["卖一", "16.46", "2315"]],
  buy: [["买一", "16.45", "147"], ["买二", "16.44", "323"], ["买三", "16.43", "215"], ["买四", "16.42", "327"], ["买五", "16.41", "250"]],
};

const g = C.green, r = C.red, t = C.text, b = C.blue;
const stats: [string, string, string, string, string, string][] = [
  ["最新", "16.46", g, "均价", "16.49", g], ["涨幅", "-1.56%", g, "涨跌", "▼0.26", g], ["总手", "38.39万", t, "金额", "6.33亿", b],
  ["盘后量", "42", t, "盘后额", "6.91万", b], ["换手*", "13.69%", t, "量比", "0.77", g], ["最高", "16.81", r, "最低", "16.20", g],
  ["今开", "16.20", g, "昨收", "16.72", t], ["涨停", "20.06", r, "跌停", "13.38", g], ["外盘", "16.80万", C.up, "内盘", "21.59万", C.down],
  ["净资产", "2.59", t, "ROE", "-0.07%", t], ["收益㈠", "-0.002", t, "PE(动)", "-2192.02", t], ["总股本", "3.384亿", t, "总值", "55.71亿", t],
  ["流通股", "2.803亿", t, "流值", "46.14亿", t],
];

const ticks: [string, string, number, string, string][] = [
  ["14:56", "16.42", -1, "265", "17"], [":09", "16.43", 1, "223", "25"], [":12", "16.43", 0, "172", "20"], [":15", "16.43", 0, "233", "25"],
  [":18", "16.43", 0, "307", "25"], [":21", "16.44", 1, "476", "41"], [":24", "16.44", 0, "126", "19"], [":27", "16.44", 0, "474", "45"],
  [":30", "16.45", 1, "89", "24"], [":33", "16.45", 0, "291", "32"], [":36", "16.45", 0, "219", "23"],
];

const Value = ({ v, c }: { v: string; c: string }) => {
  const unit = /[万亿]$/.test(v) ? v.slice(-1) : "";
  return <Num $c={c}>{unit ? v.slice(0, -1) : v}{unit && <i>{unit}</i>}</Num>;
};

const BookTable = ({ rows, last }: { rows: string[][]; last?: boolean }) => (
  <Book $last={last}>
    <tbody>
      {rows.map(([label, price, qty]) => (
        <tr key={label}><th scope="row">{label}</th><td><Num $c={C.green}>{price}</Num></td><td><Num>{qty}</Num></td><td /></tr>
      ))}
    </tbody>
  </Book>
);

const PaneActions = () => (
  <Actions>
    <button>改参数</button>
    <button>加指标</button>
    <button>换指标</button>
    <CloseBox aria-label="关闭指标"><Cross s={9} c={C.text} /></CloseBox>
  </Actions>
);

export default function App() {
  return (
    <Page>
      <Global />
      <Main>
        <Toolbar>
          <ToolGroup>
            <Tool $w={41}>5日 <Caret /></Tool>
            {["5分钟", "15分钟", "30分钟", "60分钟", "日线", "周线", "月线"].map((s) => <Tool key={s} $w={47} $on={s === "日线"}>{s}</Tool>)}
            <Tool $w={75}>更多周期<Caret /><Dot /></Tool>
          </ToolGroup>
          <ToolGroup>
            <Tool $w={22} aria-label="放大"><svg width="12" height="12" stroke="currentColor"><path d="M0 5.500H11M5.500 0V11" /></svg></Tool>
            <Tool $w={21} aria-label="缩小"><svg width="12" height="12" stroke="currentColor"><path d="M0 5.500H11" /></svg></Tool>
            <Tool $w={49} $on>复权 <Caret /></Tool>
            <Tool $w={47}>叠加 <Caret /></Tool>
            <Tool $w={47}>筹码<Dot /></Tool>
            <Tool $w={47}>画线</Tool>
            <Tool $w={54}>显示 <Caret /><Dot /></Tool>
            <Tool $w={47}>简约</Tool>
            <Tool $w={47}>隐藏<svg width="10" height="8" fill="currentColor"><path d="M0 0L5 4L0 8ZM5 0L10 4L5 8Z" /></svg></Tool>
            <Tool $w={23} aria-label="全屏">
              <svg width="14" height="14" viewBox="0 0 14 14" fill="none" stroke="currentColor"><path d="M.5 4V.5H4M.5.5L5 5M10 .5h3.500V4M13.500.5L9 5M.5 10v3.500H4M.5 13.500L5 9M10 13.500h3.500V10M13.500 13.500L9 9" /></svg>
            </Tool>
          </ToolGroup>
        </Toolbar>
        <Header $h={22}>
          <HeaderBody $ruled>
            <Title>(日线,前复权)</Title>
            <Help>?</Help>
            <IconButton aria-label="设置">
              <svg width="14" height="14" viewBox="0 0 14 14" fill="none" stroke="#a0a0a0"><path d="M7 .7L9 2.200L12.500 3.500V6L13.300 7.500L12 10.800L9.500 11.500L7 13.300L4.500 11.500L1.500 10.500V8L.7 6.500L1.500 3.500L5 2.200Z" /><circle cx="7" cy="7" r="2.500" /></svg>
            </IconButton>
            <Lead $gap={8}>MA</Lead>
            <Legend $c={C.navy}>MA5:10.35<Arrow /></Legend>
            <Legend $c={C.pink}>MA10:10.18<Arrow /></Legend>
            <Legend $c="#808080">MA20:11.33<Arrow down /></Legend>
            <Legend $c={C.maroon}>MA30:12.16<Arrow down /></Legend>
            <Legend $c="#008000">MA60:13.76<Arrow down /></Legend>
            <Legend $c={C.blue}>MA120:15.05<Arrow /></Legend>
            <Legend $c="#ffa500">MA250:12.94<Arrow /></Legend>
            <Push><Setting>设置均线<Caret /></Setting></Push>
          </HeaderBody>
          <AxisCell />
        </Header>
        <PriceChart />
        <Pane>
          <Header $h={23}>
            <HeaderBody> 1<PaneActions /></HeaderBody>
            <AxisCell />
          </Header>
          <VolumeChart />
        </Pane>
        <Pane>
          <Header $h={23}>
            <HeaderBody>
              <Lead $gap={6}>12,26,9)</Lead>
              <Legend $c={C.navy}>DIF:-0.863<Arrow /></Legend>
              <Legend $c={C.pink}>DEA:-1.042<Arrow /></Legend>
              <Legend $c="#808080">MACD:0.359<Arrow /></Legend>
              <PaneActions />
            </HeaderBody>
            <AxisCell />
          </Header>
          <MacdChart />
        </Pane>
        <TimeAxis />

        <Popup>
          <PopupTitle>
            <h2>蓝英装备(300293) 2024年6月12日 星期三</h2>
            <PopupClose aria-label="关闭"><Cross s={12} c={C.text} /></PopupClose>
          </PopupTitle>
          <PopupInfo>
            <b>分时</b>收盘:<Tone $c={C.green} $gap={6}>16.46</Tone>涨幅: <Tone $c={C.green} $gap={6}>-1.56%</Tone>最高: <Tone $c={C.red} $gap={6}>16.81</Tone>最低: <Tone $c={C.green} $gap={6}>16.20</Tone>成交:<Tone $c={C.mute}>38.4万</Tone>
            <Replay>超级复盘</Replay>
          </PopupInfo>
          <IntradayChart />
          <TipBox>
            <Tip>用键盘【左右键】移动光标至某一日K线，按【空格键】查看当日历史分时走势</Tip>
            <Tip>方向键左:前一日  方向键右:后一日</Tip>
          </TipBox>
        </Popup>
      </Main>

      <Splitter>
        <svg width="6" height="530" fill={C.mute} shapeRendering="crispEdges">
          {[254, 256, 258, 260, 262].map((y) => <path key={y} d={`M0 ${y}h1v1h-1zM2 ${y}h1v1h-1zM4 ${y}h1v1h-1z`} />)}
          <path d="M1 509L5 515V521L1 527Z" fill="#444" />
        </svg>
      </Splitter>

      <Quote>
        <QuoteHead>
          <NameRow>
            <button aria-label="上一只"><svg width="8" height="16" fill="#a0a0a0"><path d="M8 0V16L0 8Z" /></svg></button>
            <h1><span>300293</span>蓝英装备</h1>
            <button aria-label="下一只"><svg width="8" height="16" fill="#a0a0a0"><path d="M0 0V16L8 8Z" /></svg></button>
          </NameRow>
          <PriceRow>
            16.46
            <div><small>- 0.26</small><small>- 1.56%</small></div>
          </PriceRow>
        </QuoteHead>
        <Line><span>交易状态</span><span>已收市</span></Line>
        <QuadLine><span>委比</span><Num $c={C.green}>-49.11%</Num><span>委差</span><Num $c={C.green}>-2436</Num></QuadLine>
        <Line $center><a href="#dk">DK点自动提示涨跌信号</a></Line>
        <Books>
          <BookTable rows={book.sell} />
          <BookTable rows={book.buy} last />
        </Books>
        <Stats>
          <colgroup><col /><col /><col /><col /></colgroup>
          <tbody>
            {stats.map(([l1, v1, c1, l2, v2, c2]) => (
              <tr key={l1}><th scope="row">{l1}</th><td><Value v={v1} c={c1} /></td><th scope="row">{l2}</th><td><Value v={v2} c={c2} /></td></tr>
            ))}
          </tbody>
        </Stats>
        <Fold><FoldTab aria-label="收起"><svg width="6" height="3" fill="#444"><path d="M3 0L6 3H0Z" /></svg></FoldTab></Fold>
        <Ticks>
          <tbody>
            {ticks.map(([time, price, dir, vol, n], i) => (
              <tr key={time}>
                <td><Time $b={i === 0}>{time}</Time></td>
                <td><Num $c={C.green}>{price}</Num></td>
                <td>
                  {dir !== 0 && (
                    <svg width="7" height="15" fill={dir > 0 ? C.red : C.green}>
                      <path d={dir > 0 ? "M3.500 0L7 5H5V15H2V5H0Z" : "M3.500 15L7 10H5V0H2V10H0Z"} />
                    </svg>
                  )}
                </td>
                <td><Num $c={["223", "476", "89"].includes(vol) ? C.red : C.green}>{vol}</Num></td>
                <td><Num>{n}</Num></td>
              </tr>
            ))}
          </tbody>
        </Ticks>
      </Quote>
      <Strip>
        <StripTab $gap={70} /><StripTab $gap={126} /><StripTab $gap={84} /><StripTab $gap={102} /><StripTab $gap={52} />
      </Strip>
    </Page>
  );
}
